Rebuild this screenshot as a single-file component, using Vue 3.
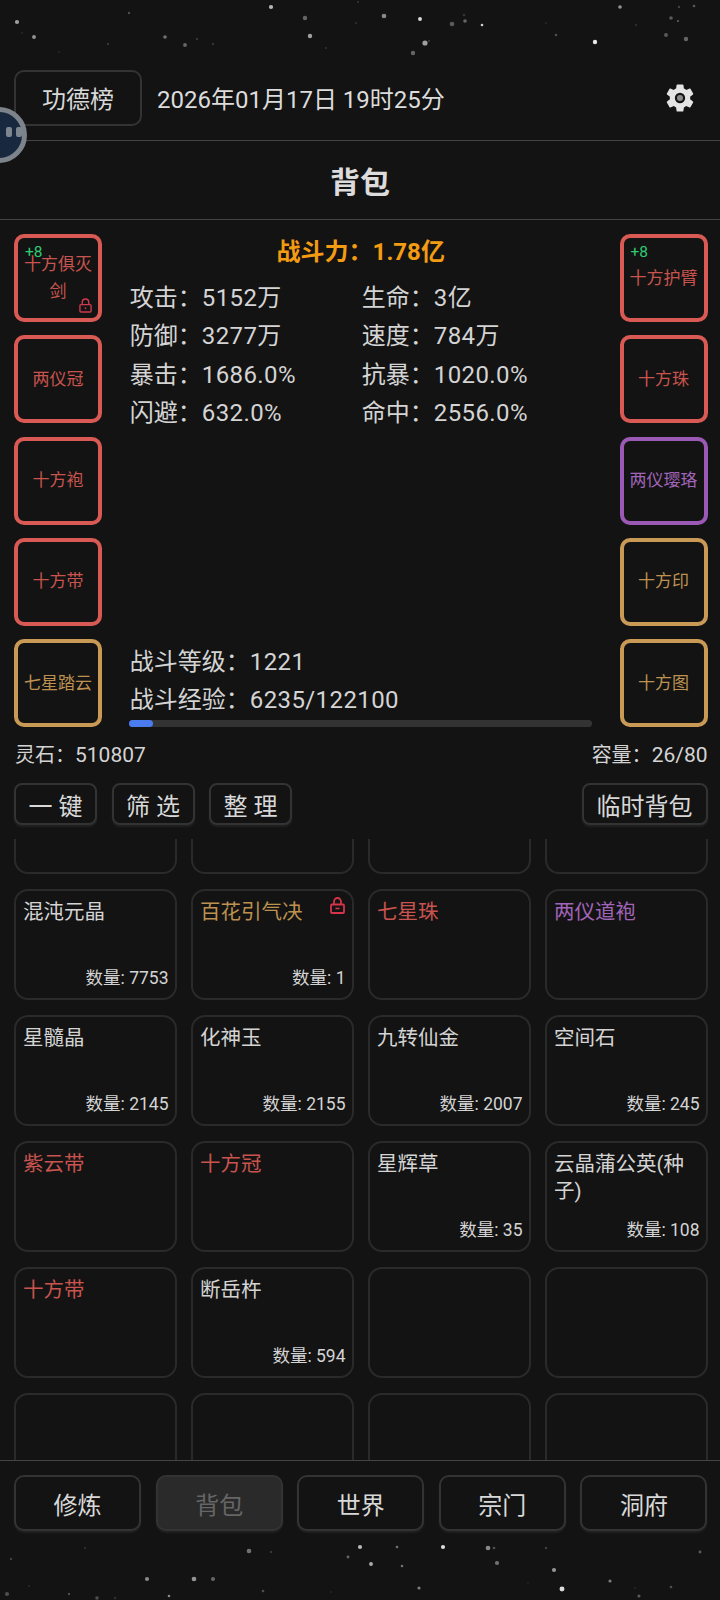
<script setup>
const stars = [
	[271, 7, 1.6, 0.7], [305, 18, 1.7, 0.35], [384, 16, 1.8, 0.5], [420, 19, 1.5, 0.85], [452, 24, 1.8, 0.3],
	[465, 21, 1.4, 0.35], [482, 25, 1, 0.8], [464, 15, 1, 0.15], [17, 22, 1.6, 0.6], [34, 37, 1.5, 0.55],
	[165, 37, 1.4, 0.4], [185, 45, 1.5, 0.35], [197, 39, 0.8, 0.2], [129, 13, 0.9, 0.25], [108, 44, 0.9, 0.15],
	[213, 44, 0.9, 0.15], [310, 36, 1.7, 0.6], [425, 43, 2, 0.6], [413, 53, 1.7, 0.35], [326, 48, 0.7, 0.15],
	[556, 35, 1, 0.25], [595, 42, 1.7, 0.9], [666, 35, 1.5, 0.3], [686, 39, 1.7, 0.35], [620, 7, 1.4, 0.55],
	[671, 18, 1.4, 0.3], [694, 6, 1, 0.3], [679, 7, 0.9, 0.2], [636, 25, 0.8, 0.15], [546, 23, 0.7, 0.1],
	[678, 21, 0.8, 0.35], [22, 33, 0.7, 0.1], [59, 52, 0.7, 0.1], [356, 23, 0.7, 0.15], [358, 2, 0.8, 0.15],
	[429, 41, 0.7, 0.2],
	[360, 1547, 1.6, 0.7], [397, 1547, 1, 0.4], [443, 1547, 1.6, 0.85], [488, 1548, 1.8, 0.5], [494, 1548, 1, 0.25],
	[546, 1548, 0.9, 0.2], [249, 1551, 1.8, 0.4], [271, 1552, 1, 0.15], [85, 1548, 0.7, 0.15], [11, 1559, 0.9, 0.2],
	[348, 1557, 1.1, 0.35], [371, 1564, 1.5, 0.65], [402, 1566, 1, 0.4], [497, 1563, 1.6, 0.4], [554, 1570, 1.6, 0.55],
	[700, 1552, 1.1, 0.3], [147, 1579, 1.6, 0.5], [194, 1579, 1.8, 0.55], [213, 1579, 1.6, 0.35], [610, 1581, 1.2, 0.45],
	[419, 1588, 1.2, 0.45], [562, 1589, 1.9, 0.85], [263, 1591, 1, 0.25], [7, 1594, 1.6, 0.25], [69, 1594, 0.9, 0.25],
	[97, 1598, 1.4, 0.25], [169, 1596, 1, 0.5], [639, 1596, 1.2, 0.3], [671, 1587, 1, 0.25], [115, 1598, 1, 0.12],
	[29, 1586, 0.8, 0.1], [635, 1588, 0.7, 0.1], [528, 1583, 0.7, 0.08], [331, 1592, 0.8, 0.08],
];

const leftGear = [
	{ name: "十方俱灭剑", tier: "red", plus: "+8", locked: true },
	{ name: "两仪冠", tier: "red" },
	{ name: "十方袍", tier: "red" },
	{ name: "十方带", tier: "red" },
	{ name: "七星踏云", tier: "gold" },
];

const rightGear = [
	{ name: "十方护臂", tier: "red", plus: "+8" },
	{ name: "十方珠", tier: "red" },
	{ name: "两仪璎珞", tier: "purple" },
	{ name: "十方印", tier: "gold" },
	{ name: "十方图", tier: "gold" },
];

const stats = [
	["攻击", "5152万", "生命", "3亿"],
	["防御", "3277万", "速度", "784万"],
	["暴击", "1686.0%", "抗暴", "1020.0%"],
	["闪避", "632.0%", "命中", "2556.0%"],
];

const items = [
	{}, {}, {}, {},
	{ name: "混沌元晶", count: 7753 },
	{ name: "百花引气决", tier: "gold", count: 1, locked: true },
	{ name: "七星珠", tier: "red" },
	{ name: "两仪道袍", tier: "purple" },
	{ name: "星髓晶", count: 2145 },
	{ name: "化神玉", count: 2155 },
	{ name: "九转仙金", count: 2007 },
	{ name: "空间石", count: 245 },
	{ name: "紫云带", tier: "red" },
	{ name: "十方冠", tier: "red" },
	{ name: "星辉草", count: 35 },
	{ name: "云晶蒲公英(种子)", count: 108 },
	{ name: "十方带", tier: "red" },
	{ name: "断岳杵", count: 594 },
	{}, {},
	{}, {}, {}, {},
];

const tabs = ["修炼", "背包", "世界", "宗门", "洞府"];
</script>

<template>
	<div class="page">
		<svg class="stars" width="720" height="1600" viewBox="0 0 720 1600">
			<circle
				v-for="(s, i) in stars"
				:key="i"
				:cx="s[0]"
				:cy="s[1]"
				:r="s[2] * 1.3"
				:fill-opacity="s[3]"
				fill="#fff"
			/>
		</svg>

		<div class="float-ball">
			<span></span>
			<span></span>
		</div>

		<header class="top">
			<button class="btn rank">功德榜</button>
			<span class="date">2026年01月17日 19时25分</span>
			<svg class="gear" viewBox="0 0 24 24" width="34" height="34">
				<path
					fill="#e4e4e4"
					d="M19.14 12.94c.04-.3.06-.61.06-.94 0-.32-.02-.64-.07-.94l2.03-1.58c.18-.14.23-.41.12-.61l-1.92-3.32c-.12-.22-.37-.29-.59-.22l-2.39.96c-.5-.38-1.03-.7-1.62-.94l-.36-2.54c-.04-.24-.24-.41-.48-.41h-3.84c-.24 0-.43.17-.47.41l-.36 2.54c-.59.24-1.13.57-1.62.94l-2.39-.96c-.22-.08-.47 0-.59.22L2.74 8.87c-.12.21-.08.47.12.61l2.03 1.58c-.05.3-.09.63-.09.94s.02.64.07.94l-2.03 1.58c-.18.14-.23.41-.12.61l1.92 3.32c.12.22.37.29.59.22l2.39-.96c.5.38 1.03.7 1.62.94l.36 2.54c.05.24.24.41.48.41h3.84c.24 0 .44-.17.47-.41l.36-2.54c.59-.24 1.13-.56 1.62-.94l2.39.96c.22.08.47 0 .59-.22l1.92-3.32c.12-.22.07-.47-.12-.61l-2.01-1.58z"
				/>
				<circle cx="12" cy="12" r="2.9" fill="#8a8a8a" stroke="#131313" stroke-width="1.5" />
			</svg>
		</header>

		<h1 class="title">背包</h1>

		<section class="equip">
			<div class="gear-col">
				<div v-for="g in leftGear" :key="g.name" class="slot" :class="g.tier">
					<span v-if="g.plus" class="plus">{{ g.plus }}</span>
					{{ g.name }}
					<svg v-if="g.locked" class="slot-lock" viewBox="0 0 14 16" width="13" height="15">
						<path d="M3.5 7V4.5a3.5 3.5 0 0 1 7 0V7" fill="none" stroke="#cf3a4c" stroke-width="1.5" />
						<rect x="1" y="7" width="12" height="8" rx="1" fill="none" stroke="#cf3a4c" stroke-width="1.5" />
						<path d="M7 10v2" stroke="#cf3a4c" stroke-width="1.5" />
					</svg>
				</div>
			</div>

			<div class="center">
				<div class="power">战斗力：1.78亿</div>
				<div class="stats">
					<template v-for="row in stats" :key="row[0]">
						<div class="stat">{{ row[0] }}：<span class="val">{{ row[1] }}</span></div>
						<div class="stat">{{ row[2] }}：<span class="val">{{ row[3] }}</span></div>
					</template>
				</div>
				<div class="level">
					<div class="stat">战斗等级：<span class="val">1221</span></div>
					<div class="stat">战斗经验：<span class="val">6235/122100</span></div>
					<div class="bar"><div class="bar-fill" :style="{ width: '24px' }"></div></div>
				</div>
			</div>

			<div class="gear-col">
				<div v-for="g in rightGear" :key="g.name" class="slot" :class="g.tier">
					<span v-if="g.plus" class="plus">{{ g.plus }}</span>
					{{ g.name }}
				</div>
			</div>
		</section>

		<div class="wallet">
			<span>灵石：<span class="num">510807</span></span>
			<span>容量：<span class="num">26/80</span></span>
		</div>

		<div class="tools">
			<button class="btn tool">一 键</button>
			<button class="btn tool">筛 选</button>
			<button class="btn tool">整 理</button>
			<button class="btn tool temp">临时背包</button>
		</div>

		<div class="list">
			<div class="grid">
				<div v-for="(item, i) in items" :key="i" class="card">
					<div v-if="item.name" class="card-name" :class="item.tier">{{ item.name }}</div>
					<svg v-if="item.locked" class="card-lock" viewBox="0 0 15 17" width="15" height="17">
						<path d="M4 7.5V4.5a3.5 3.5 0 0 1 7 0v3" fill="none" stroke="#d6344a" stroke-width="1.8" />
						<rect x="1" y="7.5" width="13" height="8.5" rx="1" fill="none" stroke="#d6344a" stroke-width="1.8" />
						<path d="M5.5 11.5h4" stroke="#d6344a" stroke-width="1.6" />
					</svg>
					<div v-if="item.count" class="card-count">数量: {{ item.count }}</div>
				</div>
			</div>
		</div>

		<nav class="tabs">
			<button v-for="t in tabs" :key="t" class="btn tab" :class="{ active: t === '背包' }">{{ t }}</button>
		</nav>
	</div>
</template>

<style>
html,
body {
	margin: 0;
	background: #131313;
}
</style>

<style scoped>
.page {
	position: relative;
	display: flex;
	flex-direction: column;
	width: 720px;
	height: 1600px;
	padding-top: 70px;
	box-sizing: border-box;
	overflow: hidden;
	background: #131313;
	color: #d4d4d4;
	font-family: Roboto, "Noto Sans CJK SC", sans-serif;
}

.stars {
	position: absolute;
	left: 0;
	top: 0;
	pointer-events: none;
	filter: blur(0.5px);
}

.float-ball {
	position: absolute;
	left: -29px;
	top: 107px;
	z-index: 5;
	display: flex;
	justify-content: flex-end;
	align-items: center;
	gap: 4px;
	width: 56px;
	height: 56px;
	box-sizing: border-box;
	border: 5px solid #7d838b;
	border-radius: 50%;
	background: #18293f;
}

.float-ball span {
	width: 6px;
	height: 10px;
	margin-bottom: 6px;
	border-radius: 2px;
	background: #7d858f;
}

.btn {
	box-sizing: border-box;
	border: 2px solid #333;
	border-radius: 8px;
	background: #131313;
	color: #d8d8d8;
	font-family: inherit;
	font-size: 24px;
	padding: 0;
	box-shadow: 0 2px 2px rgba(70, 70, 70, 0.3);
}

.top {
	display: flex;
	align-items: center;
	flex: none;
	height: 71px;
	padding: 0 14px 15px;
	box-sizing: border-box;
	border-bottom: 1.5px solid #444;
}

.rank {
	width: 128px;
	height: 56px;
	border-radius: 10px;
	box-shadow: none;
}

.date {
	margin-left: 15px;
	font-size: 24px;
	color: #dcdcdc;
}

.gear {
	margin-left: auto;
	margin-right: 9px;
}

.title {
	display: flex;
	align-items: center;
	justify-content: center;
	flex: none;
	box-sizing: border-box;
	height: 79px;
	margin: 0;
	border-bottom: 1.5px solid #444;
	font-size: 30px;
	font-weight: 700;
	color: #dcdcdc;
}

.equip {
	display: flex;
	justify-content: space-between;
	flex: none;
	height: 493px;
	margin-top: 14px;
	padding: 0 12.5px 0 14px;
}

.gear-col {
	display: flex;
	flex-direction: column;
	justify-content: space-between;
	width: 88px;
}

.slot {
	position: relative;
	display: flex;
	align-items: center;
	justify-content: center;
	box-sizing: border-box;
	width: 88px;
	height: 88px;
	padding: 0 4px;
	border: 4px solid;
	border-radius: 10px;
	font-size: 17px;
	line-height: 27px;
	text-align: center;
}

.slot.red {
	border-color: #d95a54;
	color: #c9534e;
}

.slot.gold {
	border-color: #c99a56;
	color: #bd9150;
}

.slot.purple {
	border-color: #9b59b6;
	color: #a064b8;
}

.plus {
	position: absolute;
	left: 7px;
	top: 5px;
	font-size: 15.5px;
	line-height: 18px;
	color: #2ecc71;
}

.slot-lock {
	position: absolute;
	right: 6px;
	bottom: 5px;
}

.center {
	display: flex;
	flex-direction: column;
	width: 466px;
}

.power {
	height: 36px;
	line-height: 36px;
	text-align: center;
	font-size: 24px;
	font-weight: 700;
	color: #f39c12;
}

.stats {
	display: grid;
	grid-template-columns: 232px 1fr;
	grid-auto-rows: 38.4px;
	margin-top: 9px;
	padding-left: 2px;
}

.stat {
	font-size: 24px;
	line-height: 38.4px;
	white-space: nowrap;
	color: #d4d4d4;
}

.val {
	letter-spacing: 0.4px;
}

.level {
	margin-top: auto;
	padding-left: 2px;
}

.level .stat {
	line-height: 38px;
}

.bar {
	width: 463px;
	height: 7px;
	margin: 1px 0 0 -1px;
	border-radius: 4px;
	background: #333;
}

.bar-fill {
	height: 100%;
	border-radius: 4px;
	background: #4a7cf0;
}

.wallet {
	display: flex;
	justify-content: space-between;
	flex: none;
	height: 28px;
	margin-top: 14px;
	padding: 0 12.5px 0 15px;
	font-size: 20px;
	line-height: 28px;
}

.num {
	font-size: 21px;
}

.tools {
	display: flex;
	gap: 14.5px;
	flex: none;
	margin-top: 14px;
	padding: 0 12.5px 0 14px;
}

.tool {
	width: 83px;
	height: 42px;
}

.temp {
	width: 126px;
	margin-left: auto;
}

.list {
	flex: none;
	height: 621px;
	margin-top: 14px;
	overflow: hidden;
	padding: 0 12.5px 0 14px;
}

.grid {
	display: grid;
	grid-template-columns: repeat(4, 1fr);
	grid-auto-rows: 111px;
	gap: 15px 14.5px;
	margin-top: -76px;
}

.card {
	position: relative;
	box-sizing: border-box;
	padding: 8px 7px;
	border: 2px solid #2a2a2a;
	border-radius: 14px;
}

.card-name {
	font-size: 20.5px;
	line-height: 27px;
	color: #d4d4d4;
}

.card-name.red {
	color: #c9534e;
}

.card-name.gold {
	color: #bd9150;
}

.card-name.purple {
	color: #a064b8;
}

.card-lock {
	position: absolute;
	right: 7px;
	top: 6px;
}

.card-count {
	position: absolute;
	right: 6px;
	bottom: 9px;
	font-size: 17.5px;
	line-height: 22px;
	color: #d4d4d4;
}

.tabs {
	display: flex;
	gap: 14.5px;
	flex: none;
	padding: 14px 12.5px 0 14px;
	border-top: 1.5px solid #444;
}

.tab {
	flex: 1;
	height: 56px;
	border-radius: 10px;
}

.tab.active {
	background: #2a2a2a;
	color: #666;
}
</style>
